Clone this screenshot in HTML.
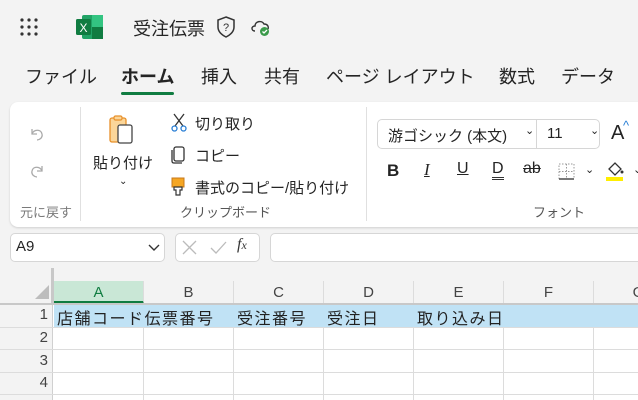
<!DOCTYPE html>
<html style="width:638px;height:400px;overflow:hidden"><head><meta charset="utf-8"><style>
*{margin:0;padding:0;box-sizing:border-box}
body{width:638px;height:400px;overflow:hidden;background:#f3f3f3;font-family:"Liberation Sans","Noto Sans CJK JP",sans-serif;color:#242424;position:relative}
.a{position:absolute;white-space:nowrap}
.t{font-size:15px}
.tab{font-size:18px;top:63px}
.g{color:#7a7a7a;font-size:13px}
.col{position:absolute;top:281px;height:23px;border-right:1px solid #dcdcdc;text-align:center;font-size:15px;line-height:23px;color:#444}
.vl{position:absolute;top:304px;height:96px;width:1px;background:#dcdcdc}
.hl{position:absolute;left:0;width:638px;height:1px;background:#dcdcdc}
.rn{position:absolute;left:0;width:48px;text-align:right;font-size:15px;color:#444}
.c{position:absolute;top:305px;font-size:16px;letter-spacing:1.5px;color:#222}
</style></head><body>
<svg class="a" style="left:20px;top:18px" width="20" height="18"><g fill="#333"><circle cx="2" cy="2" r="1.6"/><circle cx="9" cy="2" r="1.6"/><circle cx="16" cy="2" r="1.6"/><circle cx="2" cy="9" r="1.6"/><circle cx="9" cy="9" r="1.6"/><circle cx="16" cy="9" r="1.6"/><circle cx="2" cy="16" r="1.6"/><circle cx="9" cy="16" r="1.6"/><circle cx="16" cy="16" r="1.6"/></g></svg>
<svg class="a" style="left:76px;top:15px" width="27" height="24"><rect x="6" y="0" width="21" height="24" rx="2" fill="#21a366"/><rect x="16" y="0" width="11" height="12" fill="#33c481"/><rect x="16" y="12" width="11" height="12" fill="#107c41"/><rect x="0" y="4" width="15" height="16" rx="1.5" fill="#107c41"/><text x="7.5" y="17" font-size="12" fill="#fff" text-anchor="middle" font-family="Liberation Sans">X</text></svg>
<div class="a" style="left:133px;top:15px;font-size:18px">受注伝票</div>
<svg class="a" style="left:216px;top:16px" width="20" height="22"><path d="M10 1 L18 4 V11 C18 16 14 19 10 21 C6 19 2 16 2 11 V4 Z" fill="none" stroke="#333" stroke-width="1.5"/><text x="10" y="15" font-size="11" text-anchor="middle" fill="#333" font-family="Liberation Sans">?</text></svg>
<svg class="a" style="left:250px;top:17px" width="22" height="20"><path d="M5 14 C1 14 1 9 5 9 C5 4 12 3 14 7 C17 7 19 9 18 12" fill="none" stroke="#333" stroke-width="1.4"/><circle cx="14.5" cy="14.5" r="4.5" fill="#3a9a4a"/><path d="M12.5 14.5 l1.5 1.5 l3-3" stroke="#fff" stroke-width="1.3" fill="none"/></svg>
<div class="a tab" style="left:25px">ファイル</div>
<div class="a tab" style="left:121px;font-weight:bold">ホーム</div>
<div class="a" style="left:121px;top:92px;width:53px;height:3px;background:#107c41;border-radius:2px"></div>
<div class="a tab" style="left:201px">挿入</div>
<div class="a tab" style="left:264px">共有</div>
<div class="a tab" style="left:326px">ページ レイアウト</div>
<div class="a tab" style="left:499px">数式</div>
<div class="a tab" style="left:561px">データ</div>
<div class="a" style="left:10px;top:102px;width:640px;height:125px;background:#fff;border-radius:8px;box-shadow:0 1px 2px rgba(0,0,0,.15)"></div>
<svg class="a" style="left:28px;top:125px" width="18" height="16"><path d="M4 4 v5 h5 M4 9 C6 4 13 4 14 9 C15 13 11 15 9 15" fill="none" stroke="#aaa" stroke-width="1.3"/></svg>
<svg class="a" style="left:28px;top:162px" width="18" height="16"><path d="M14 4 v5 h-5 M14 9 C12 4 5 4 4 9 C3 13 7 15 9 15" fill="none" stroke="#aaa" stroke-width="1.3"/></svg>
<div class="a g" style="left:20px;top:202px">元に戻す</div>
<div class="a" style="left:80px;top:107px;width:1px;height:114px;background:#e0e0e0"></div>
<svg class="a" style="left:109px;top:115px" width="26" height="30"><rect x="1" y="3" width="16" height="24" rx="2" fill="#fbd699" stroke="#e8902a" stroke-width="1.3"/><rect x="5" y="1" width="8" height="4" rx="1.5" fill="#fbd699" stroke="#e8902a" stroke-width="1.2"/><rect x="9" y="10" width="14" height="18" rx="2" fill="#fff" stroke="#444" stroke-width="1.3"/></svg>
<div class="a t" style="left:93px;top:152px">貼り付け</div>
<div class="a" style="left:119px;top:176px;font-size:10px">⌄</div>
<svg class="a" style="left:170px;top:113px" width="18" height="20"><path d="M4 1 L13 13 M14 1 L5 13" stroke="#333" stroke-width="1.3"/><circle cx="4.5" cy="15.5" r="2.5" fill="none" stroke="#2a7fd4" stroke-width="1.3"/><circle cx="13.5" cy="15.5" r="2.5" fill="none" stroke="#2a7fd4" stroke-width="1.3"/></svg>
<div class="a t" style="left:195px;top:113px">切り取り</div>
<svg class="a" style="left:170px;top:146px" width="16" height="18"><rect x="4" y="1" width="10" height="14" rx="2" fill="none" stroke="#333" stroke-width="1.3"/><path d="M2 4 v11 q0 2 2 2 h8" fill="none" stroke="#333" stroke-width="1.3"/></svg>
<div class="a t" style="left:195px;top:145px">コピー</div>
<svg class="a" style="left:171px;top:177px" width="14" height="20"><rect x="1" y="1" width="12" height="9" fill="#f5a623" stroke="#c8781a"/><path d="M3 10 h8 v3 h-2 v5 h-4 v-5 h-2z" fill="#fff" stroke="#333" stroke-width="1.2"/></svg>
<div class="a t" style="left:195px;top:177px">書式のコピー/貼り付け</div>
<div class="a g" style="left:180px;top:202px;color:#555">クリップボード</div>
<div class="a" style="left:366px;top:107px;width:1px;height:114px;background:#e0e0e0"></div>
<div class="a" style="left:377px;top:119px;width:223px;height:30px;border:1px solid #d6d6d6;border-radius:5px"></div>
<div class="a" style="left:536px;top:119px;width:1px;height:30px;background:#d6d6d6"></div>
<div class="a t" style="left:388px;top:125px">游ゴシック (本文)</div>
<div class="a" style="left:525px;top:124px;font-size:11px">⌄</div>
<div class="a t" style="left:547px;top:125px">11</div>
<div class="a" style="left:590px;top:124px;font-size:11px">⌄</div>
<div class="a" style="left:611px;top:122px;font-size:20px">A</div><div class="a" style="left:623px;top:118px;font-size:13px;color:#2a7fd4">^</div>
<div class="a" style="left:387px;top:161px;font-size:17px;font-weight:bold">B</div>
<div class="a" style="left:424px;top:160px;font-size:17px;font-family:'Liberation Serif',serif;font-style:italic;text-decoration:underline">I</div>
<div class="a" style="left:457px;top:160px;font-size:16px;text-decoration:underline">U</div>
<div class="a" style="left:492px;top:160px;font-size:16px;border-bottom:3px double #333;line-height:17px">D</div>
<div class="a" style="left:523px;top:160px;font-size:16px;text-decoration:line-through">ab</div>
<svg class="a" style="left:558px;top:163px" width="18" height="18"><rect x="1" y="1" width="15" height="15" fill="none" stroke="#999" stroke-dasharray="1.5 1.5"/><path d="M1 8.5 h15 M8.5 1 v15" stroke="#999" stroke-dasharray="1.5 1.5"/><path d="M1 16 h15" stroke="#333" stroke-width="1.3"/></svg>
<div class="a" style="left:585px;top:163px;font-size:11px">⌄</div>
<svg class="a" style="left:605px;top:160px" width="20" height="22"><path d="M4 9 L10 3 L16 9 L10 15 Z" fill="none" stroke="#333" stroke-width="1.3"/><circle cx="17" cy="12" r="1.5" fill="#333"/><rect x="1" y="17" width="17" height="4" fill="#ffee00"/></svg>
<div class="a" style="left:633px;top:163px;font-size:11px">⌄</div>
<div class="a g" style="left:533px;top:202px;color:#555">フォント</div>
<div class="a" style="left:10px;top:233px;width:155px;height:29px;background:#fff;border:1px solid #d6d6d6;border-radius:5px"></div>
<div class="a" style="left:16px;top:238px;font-size:15px">A9</div>
<svg class="a" style="left:148px;top:244px" width="12" height="8"><path d="M1 1 l5 5 l5-5" fill="none" stroke="#333" stroke-width="1.4"/></svg>
<div class="a" style="left:175px;top:233px;width:85px;height:29px;background:#fff;border:1px solid #d6d6d6;border-radius:5px"></div>
<svg class="a" style="left:182px;top:240px" width="50" height="16"><path d="M1 1 l13 13 M14 1 l-13 13 M29 8 l5 5 l10-11" fill="none" stroke="#bbb" stroke-width="1.3"/></svg>
<div class="a" style="left:237px;top:236px;font-size:16px;font-family:'Liberation Serif',serif;font-style:italic;color:#333">f<span style="font-size:12px">x</span></div>
<div class="a" style="left:270px;top:233px;width:380px;height:29px;background:#fff;border:1px solid #d6d6d6;border-radius:5px"></div>
<div class="a" style="left:0;top:281px;width:638px;height:119px;background:#fff"></div>
<div class="a" style="left:0;top:268px;width:53px;height:36px;background:#f3f3f3"></div>
<div class="a" style="left:0;top:281px;width:638px;height:23px;background:#f3f3f3"></div>
<div class="a" style="left:51px;top:268px;width:3px;height:36px;background:#c8c8c8"></div>
<svg class="a" style="left:34px;top:284px" width="16" height="16"><path d="M15 1 V15 H1 Z" fill="#bdbdbd"/></svg>
<div class="col" style="left:54px;width:90px;background:#c9e7d6;color:#107c41;border-bottom:3px solid #107c41;height:23px">A</div>
<div class="col" style="left:144px;width:90px">B</div>
<div class="col" style="left:234px;width:90px">C</div>
<div class="col" style="left:324px;width:90px">D</div>
<div class="col" style="left:414px;width:90px">E</div>
<div class="col" style="left:504px;width:90px">F</div>
<div class="col" style="left:594px;width:90px">G</div>
<div class="a" style="left:0;top:303px;width:638px;height:2px;background:#c8c8c8"></div>
<div class="a" style="left:0;top:305px;width:53px;height:95px;background:#f3f3f3;border-right:1px solid #d0d0d0"></div>
<div class="a" style="left:54px;top:305px;width:584px;height:22px;background:#c0e2f5"></div>
<div class="vl" style="left:143px;top:327px;height:73px"></div><div class="vl" style="left:233px;top:327px;height:73px"></div><div class="vl" style="left:323px;top:327px;height:73px"></div><div class="vl" style="left:413px;top:327px;height:73px"></div><div class="vl" style="left:503px;top:327px;height:73px"></div><div class="vl" style="left:593px;top:327px;height:73px"></div>
<div class="hl" style="top:327px"></div><div class="hl" style="top:349px"></div><div class="hl" style="top:372px"></div><div class="hl" style="top:394px"></div>
<div class="rn" style="top:306px">1</div>
<div class="rn" style="top:329px">2</div>
<div class="rn" style="top:352px">3</div>
<div class="rn" style="top:374px">4</div>
<div class="c" style="left:57px">店舗コード伝票番号</div>
<div class="c" style="left:237px">受注番号</div>
<div class="c" style="left:327px">受注日</div>
<div class="c" style="left:417px">取り込み日</div>
</body></html>
